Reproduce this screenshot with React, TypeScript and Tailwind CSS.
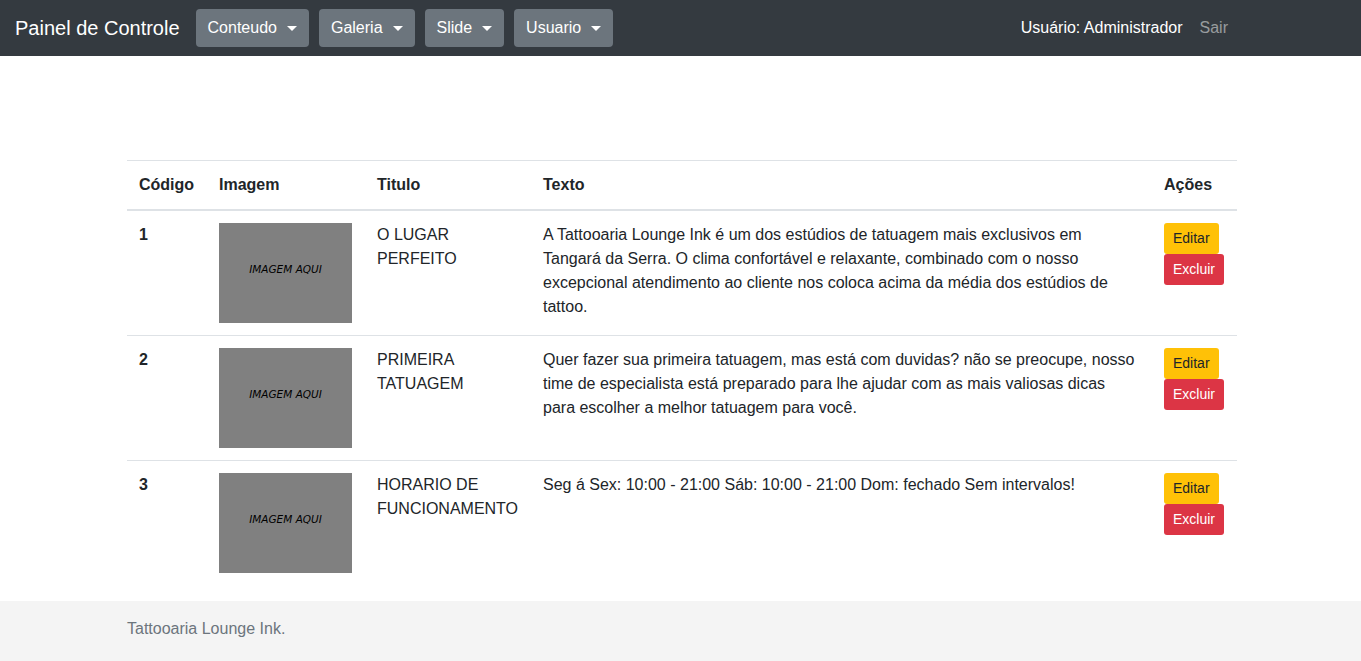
import React from "react";

const rows = [
  {
    id: 1,
    titulo: "O LUGAR PERFEITO",
    texto:
      "A Tattooaria Lounge Ink é um dos estúdios de tatuagem mais exclusivos em Tangará da Serra. O clima confortável e relaxante, combinado com o nosso excepcional atendimento ao cliente nos coloca acima da média dos estúdios de tattoo.",
  },
  {
    id: 2,
    titulo: "PRIMEIRA TATUAGEM",
    texto:
      "Quer fazer sua primeira tatuagem, mas está com duvidas? não se preocupe, nosso time de especialista está preparado para lhe ajudar com as mais valiosas dicas para escolher a melhor tatuagem para você.",
  },
  {
    id: 3,
    titulo: "HORARIO DE FUNCIONAMENTO",
    texto: "Seg á Sex: 10:00 - 21:00 Sáb: 10:00 - 21:00 Dom: fechado Sem intervalos!",
  },
];

const menus = ["Conteudo", "Galeria", "Slide", "Usuario"];

function DropBtn({ label }: { label: string }) {
  return (
    <button className="flex items-center h-[38px] px-3 rounded bg-[#6c757d] text-white text-base leading-6">
      {label}
      <span className="ml-[10px] w-0 h-0 border-l-[5px] border-r-[5px] border-t-[5px] border-l-transparent border-r-transparent border-t-white" />
    </button>
  );
}

export default function App() {
  return (
    <div className="min-h-screen bg-white text-[#212529] font-['Liberation_Sans',Arial,sans-serif]">
      <nav className="h-14 bg-[#343a40] flex items-center pl-[15px]">
        <span className="text-xl text-white mr-4">Painel de Controle</span>
        <div className="flex gap-[10px]">
          {menus.map(m => (
            <DropBtn key={m} label={m} />
          ))}
        </div>
        <div className="ml-auto mr-[133px] flex items-center gap-[17px] text-base">
          <span className="text-white">Usuário: Administrador</span>
          <a className="text-white/50">Sair</a>
        </div>
      </nav>

      <div className="w-[1110px] ml-[127px] mt-[104px] mb-4">
        <table className="w-full table-fixed border-collapse text-base leading-6">
          <colgroup>
            <col className="w-[80px]" />
            <col className="w-[158px]" />
            <col className="w-[166px]" />
            <col className="w-[621px]" />
            <col className="w-[85px]" />
          </colgroup>
          <thead>
            <tr className="border-t border-[#dee2e6] border-b-2">
              <th className="p-3 text-left font-bold">Código</th>
              <th className="p-3 text-left font-bold">Imagem</th>
              <th className="p-3 text-left font-bold">Titulo</th>
              <th className="p-3 text-left font-bold">Texto</th>
              <th className="p-3 text-left font-bold">Ações</th>
            </tr>
          </thead>
          <tbody>
            {rows.map(r => (
              <tr key={r.id} className="border-t border-[#dee2e6] align-top">
                <td className="p-3 font-bold">{r.id}</td>
                <td className="p-3">
                  <div className="w-[133px] h-[100px] pb-2 bg-[#808080] flex items-center justify-center">
                    <span className="italic text-[10.5px] text-black font-['DejaVu_Sans',sans-serif]">IMAGEM AQUI</span>
                  </div>
                </td>
                <td className="p-3">{r.titulo}</td>
                <td className="p-3">{r.texto}</td>
                <td className="p-3">
                  <div className="flex flex-col items-start">
                    <button className="px-2 py-1 border border-transparent text-sm leading-[21px] rounded-[3px] bg-[#ffc107] text-[#212529]">Editar</button>
                    <button className="px-2 py-1 border border-transparent text-sm leading-[21px] rounded-[3px] bg-[#dc3545] text-white">Excluir</button>
                  </div>
                </td>
              </tr>
            ))}
          </tbody>
        </table>
      </div>

      <footer className="bg-[#f4f4f4] h-[60px] py-4">
        <div className="w-[1110px] ml-[127px] text-[#6c757d] leading-6">Tattooaria Lounge Ink.</div>
      </footer>
    </div>
  );
}
